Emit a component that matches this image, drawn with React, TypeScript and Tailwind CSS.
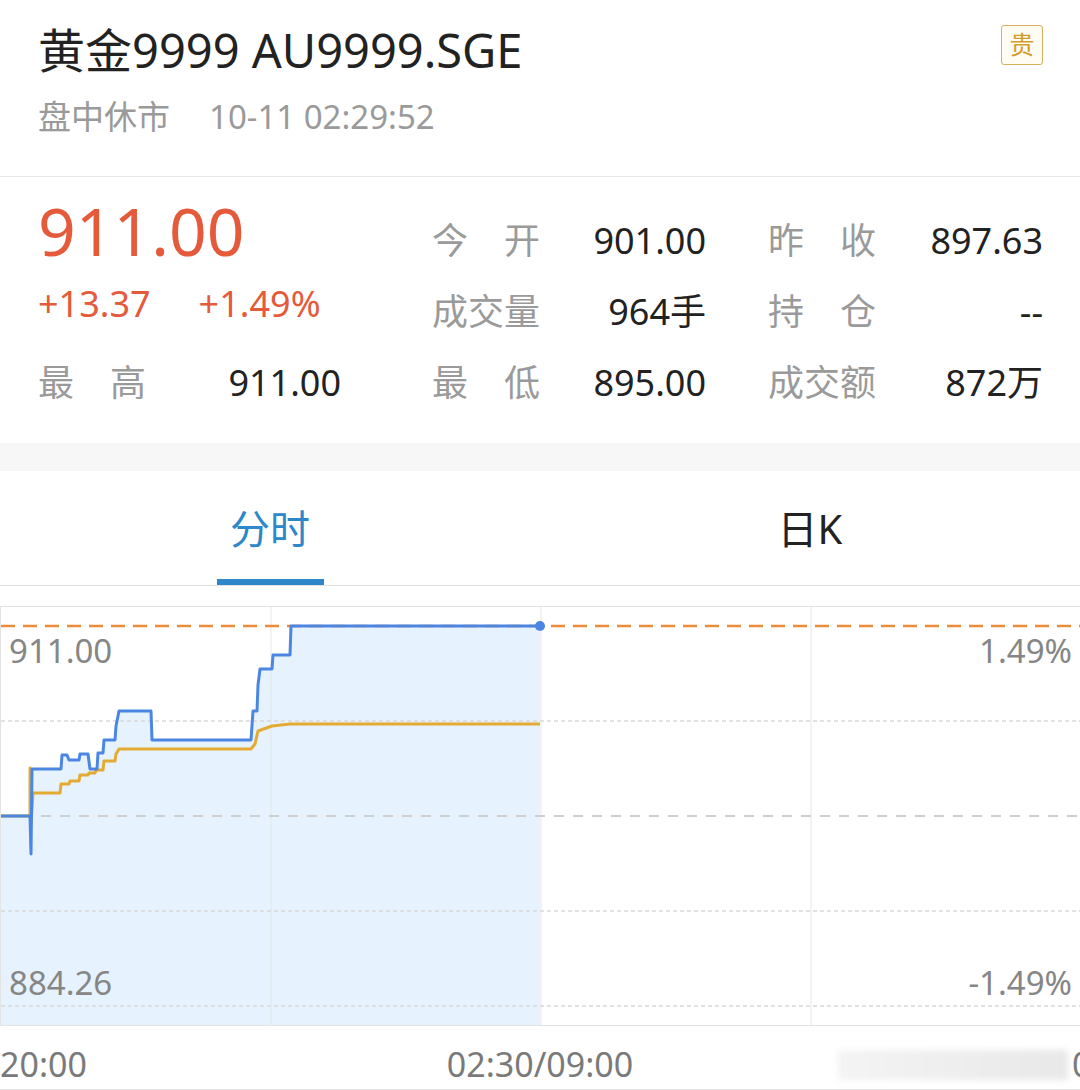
import React from 'react';

const FONT = { fontFamily: '"Noto Sans", "Noto Sans CJK SC", sans-serif' };

const stats = [
  [['今', '开'], '901.00', ['昨', '收'], '897.63'],
  [['成', '交', '量'], '964手', ['持', '仓'], '--'],
  [['最', '低'], '895.00', ['成', '交', '额'], '872万'],
];

function Label({ chars }: { chars: string[] }) {
  return (
    <div className="flex w-[108px] justify-between text-[#9a9a9a]">
      {chars.map((c, i) => (
        <span key={i}>{c}</span>
      ))}
    </div>
  );
}

// price line (blue) and average line (gold), y relative to chart top (y=606)
const bluePts =
  '0,209 29,209 30,247 31,162 60,162 61,148 66,148 68,153 78,153 79,147 87,147 89,162 96,162 97,146 102,146 103,133 114,133 115,119 118,104 150,104 151,133 250,133 252,104 256,104 257,78 259,62 271,62 272,48 289,48 290,19 539,19';
const goldPts =
  '0,209 29,209 29,161 30,217 32,186 59,186 60,177 68,177 69,174 78,174 79,168 87,168 88,166 94,166 95,163 102,163 103,154 114,154 115,147 118,142 250,142 254,137 257,124 271,119 289,117 539,117';

function Chart() {
  return (
    <div className="relative h-[420px] border-y border-l border-[#e3e3e3]">
      <svg width="1080" height="418" className="block">
        <polygon points={`${bluePts} 539,418 0,418`} fill="#e6f2fd" />
        {[270, 540, 810].map((x) => (
          <line key={x} x1={x} y1={0} x2={x} y2={418} stroke="#e2e6ea" strokeWidth="1" />
        ))}
        {[114, 304, 399].map((y) => (
          <line key={y} x1={0} y1={y} x2={1080} y2={y} stroke="#d9d9d9" strokeWidth="1.5" strokeDasharray="4 3" />
        ))}
        <line x1={40} y1={209} x2={1080} y2={209} stroke="#cfcfcf" strokeWidth="2" strokeDasharray="10 9" />
        <line x1={0} y1={19} x2={1080} y2={19} stroke="#ec8b3a" strokeWidth="2.5" strokeDasharray="14 8" />
        <polyline points={goldPts} fill="none" stroke="#e3ab33" strokeWidth="3" strokeLinejoin="round" />
        <polyline points={bluePts} fill="none" stroke="#4b86e2" strokeWidth="3" strokeLinejoin="round" />
        <circle cx={539} cy={19} r={5} fill="#4b86e2" />
      </svg>
      <span className="absolute left-[8px] top-[22px] text-[33px] leading-[44px] text-[#868686]">911.00</span>
      <span className="absolute right-[8px] top-[22px] text-[33px] leading-[44px] text-[#868686]">1.49%</span>
      <span className="absolute left-[8px] top-[354px] text-[33px] leading-[44px] text-[#868686]">884.26</span>
      <span className="absolute right-[8px] top-[354px] text-[33px] leading-[44px] text-[#868686]">-1.49%</span>
    </div>
  );
}

export default function App() {
  return (
    <div className="w-[1080px] h-[1090px] overflow-hidden bg-white" style={FONT}>
      {/* header */}
      <div className="flex h-[177px] justify-between border-b border-[#e8e8e8] pl-[38px] pr-[37px]">
        <div className="flex flex-col">
          <div className="mt-[20px] text-[47px] leading-[60px] text-[#222]">黄金9999 AU9999.SGE</div>
          <div className="mt-[15px] flex text-[33px] leading-[44px] text-[#9a9a9a]">
            <span>盘中休市</span>
            <span className="ml-[39px]">10-11 02:29:52</span>
          </div>
        </div>
        <div className="mt-[25px] flex h-[40px] w-[42px] items-center justify-center rounded-[3px] border border-[#d8b060] bg-[#fffcf4] text-[25px] text-[#d39d2c]">
          贵
        </div>
      </div>

      {/* quote */}
      <div className="flex pl-[38px] pt-[28px] pb-[25px] text-[36px]">
        <div className="flex w-[303px] flex-col">
          <div className="flex h-[71px] items-center pb-[22px]">
            <span className="text-[66px] leading-none text-[#e45a3b]">911.00</span>
          </div>
          <div className="flex h-[71px] items-center pb-[16px] text-[#e45a3b]">
            <span>+13.37</span>
            <span className="ml-[48px]">+1.49%</span>
          </div>
          <div className="flex h-[71px] items-center">
            <Label chars={['最', '高']} />
            <span className="flex-1 text-right text-[#222]">911.00</span>
          </div>
        </div>
        <div className="ml-[91px] flex w-[611px] flex-col">
          {stats.map((r, i) => (
            <div key={i} className="flex h-[71px] items-center">
              <div className="flex w-[274px] items-center">
                <Label chars={r[0] as string[]} />
                <span className="flex-1 text-right text-[#222]">{r[1] as string}</span>
              </div>
              <div className="ml-[62px] flex w-[275px] items-center">
                <Label chars={r[2] as string[]} />
                <span className="flex-1 text-right text-[#222]">{r[3] as string}</span>
              </div>
            </div>
          ))}
        </div>
      </div>

      <div className="h-[28px] bg-[#f7f7f7]" />

      {/* tabs */}
      <div className="flex h-[115px] border-b border-[#e0e0e0] text-[40px]">
        <div className="flex flex-1 flex-col items-center justify-end">
          <span className="mb-[20px] text-[#2d87c8]">分时</span>
          <div className="h-[6px] w-[107px] bg-[#2d87c8]" />
        </div>
        <div className="flex flex-1 flex-col items-center justify-end">
          <span className="mb-[26px] text-[#222]">日K</span>
        </div>
      </div>

      <div className="h-[20px]" />
      <Chart />

      {/* time axis */}
      <div className="flex h-[64px] items-center border-b border-[#e3e3e3] pt-[14px] text-[34px] text-[#7a7a7a]">
        <span className="w-[360px]">20:00</span>
        <span className="w-[360px] text-center">02:30/09:00</span>
        <div className="flex w-[360px] items-center justify-end">
          <div className="mr-[4px] h-[30px] w-[230px] bg-gradient-to-r from-[#f4f4f4] to-[#e8e8e8] blur-[3px]" />
          <span className="w-[8px] overflow-hidden">0</span>
        </div>
      </div>
    </div>
  );
}
